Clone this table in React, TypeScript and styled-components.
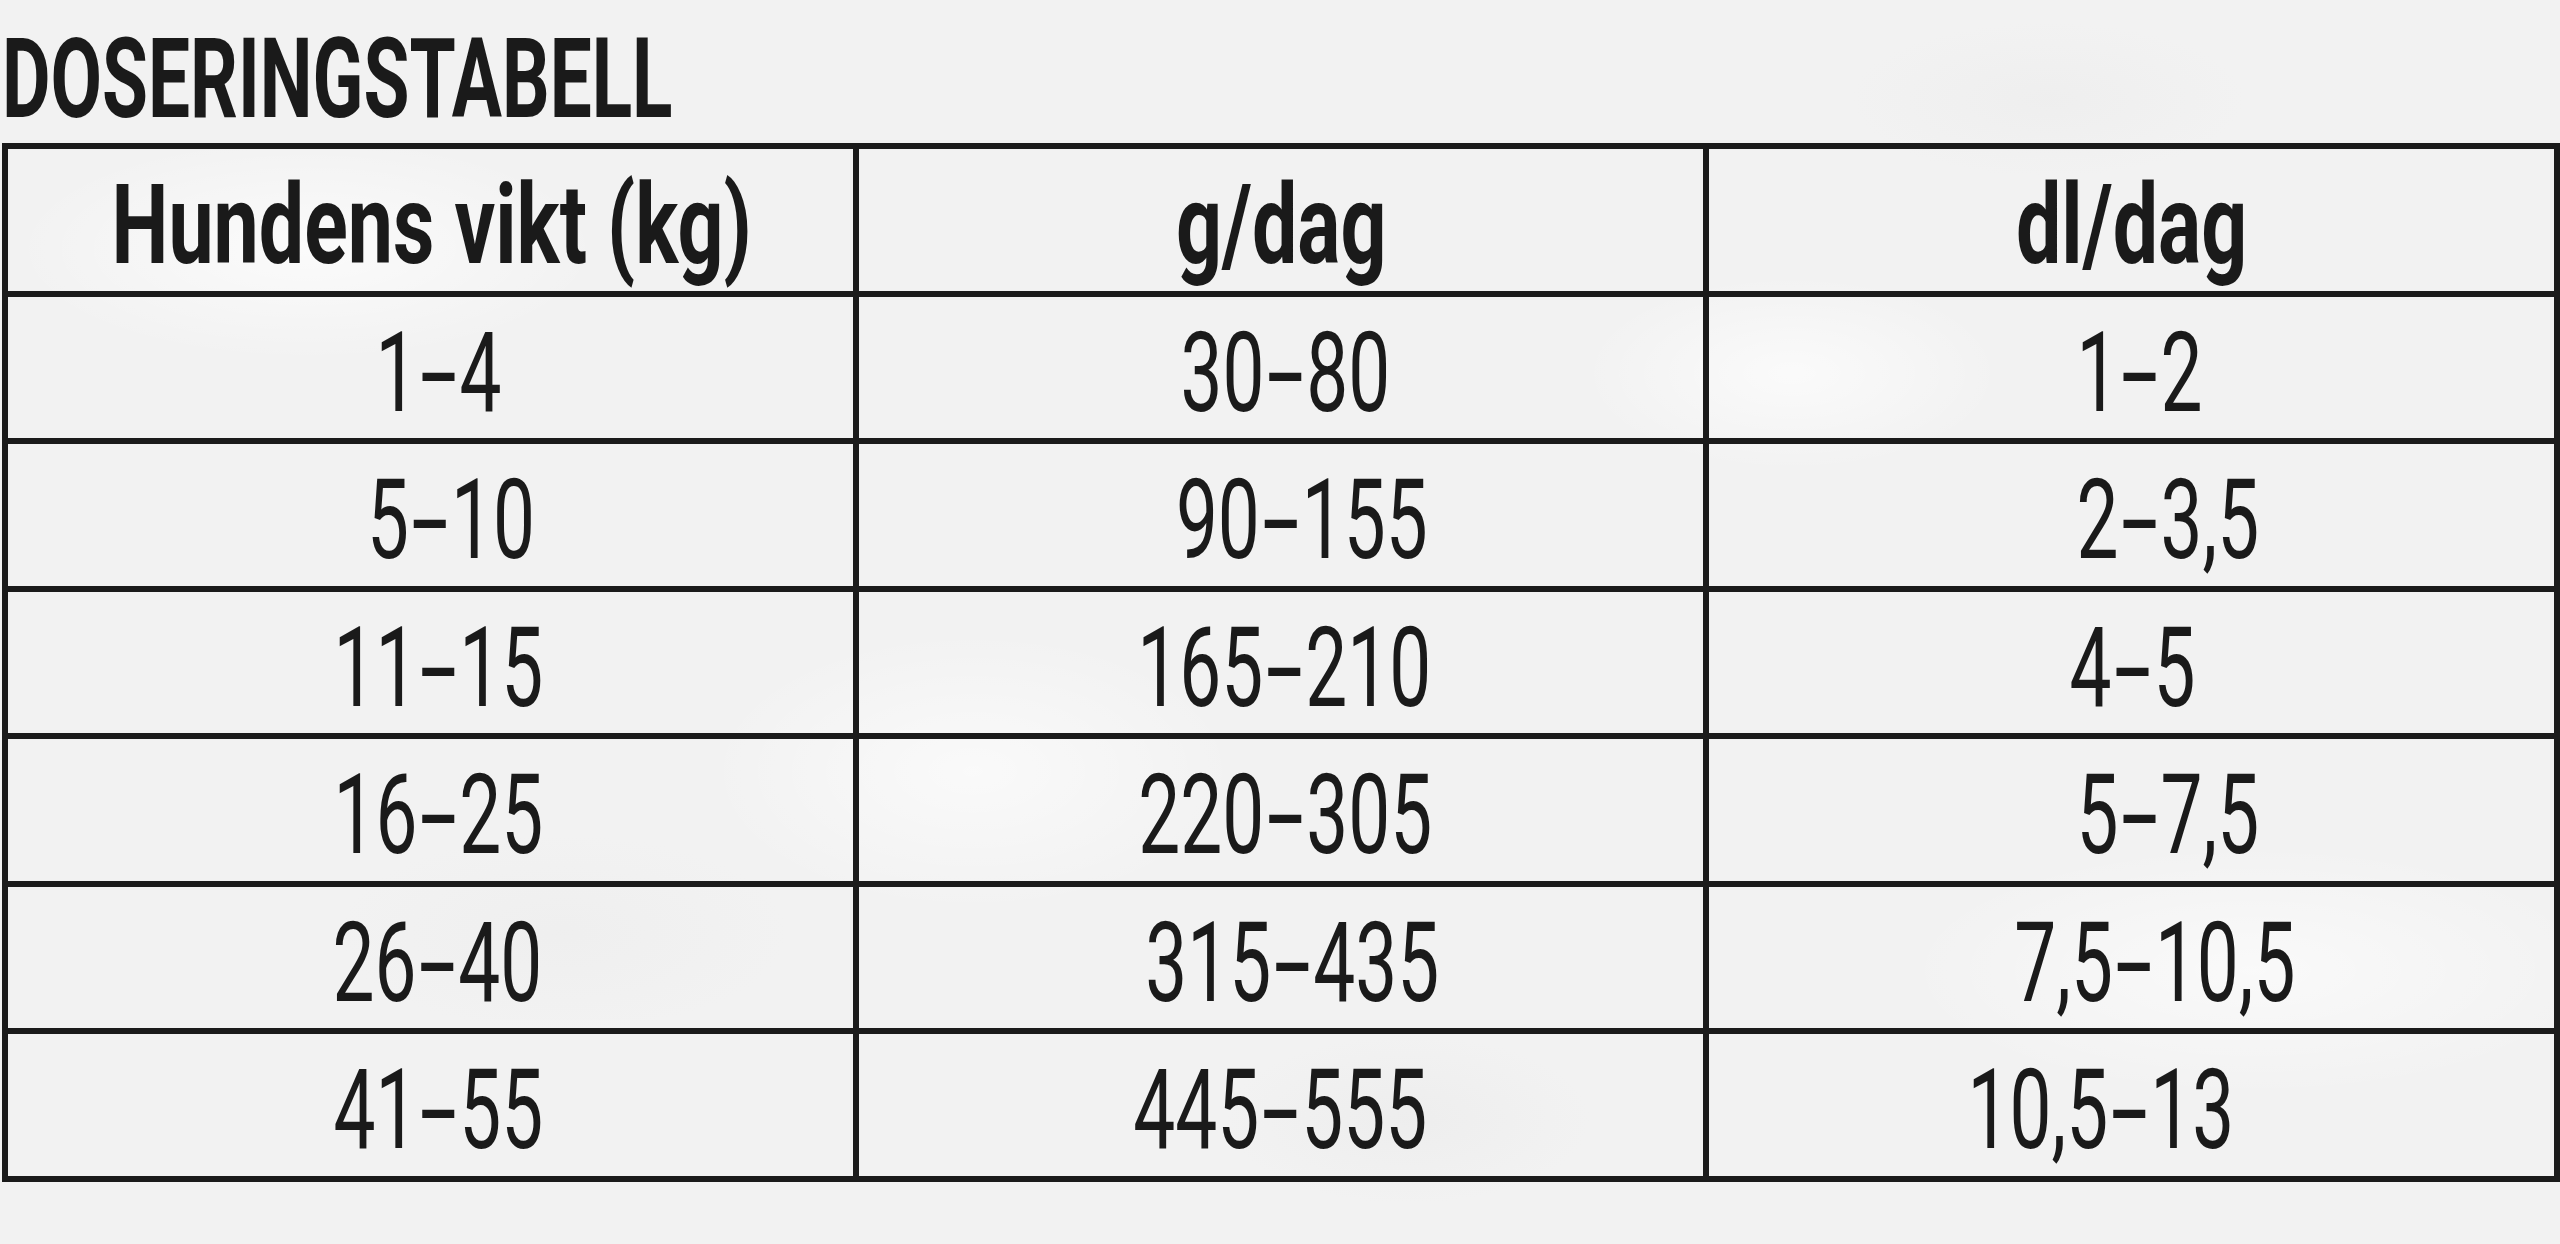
import React from "react";
import styled, { createGlobalStyle } from "styled-components";

type CellData = { text: string; shift?: number };

const header: CellData[] = [
  { text: "Hundens vikt (kg)", shift: 1 },
  { text: "g/dag" },
  { text: "dl/dag" },
];

// shift = how far the printed value sits off the cell centre (px)
const rows: CellData[][] = [
  [{ text: "1-4", shift: 8 }, { text: "30-80", shift: 4 }, { text: "1-2", shift: 8 }],
  [{ text: "5-10", shift: 21 }, { text: "90-155", shift: 21 }, { text: "2-3,5", shift: 36 }],
  [{ text: "11-15", shift: 8 }, { text: "165-210", shift: 3 }, { text: "4-5", shift: 1 }],
  [{ text: "16-25", shift: 8 }, { text: "220-305", shift: 4 }, { text: "5-7,5", shift: 36 }],
  [{ text: "26-40", shift: 7 }, { text: "315-435", shift: 11 }, { text: "7,5-10,5", shift: 23 }],
  [{ text: "41-55", shift: 8 }, { text: "445-555", shift: -1 }, { text: "10,5-13", shift: -31 }],
];

const GlobalStyle = createGlobalStyle`
  html, body {
    margin: 0;
    padding: 0;
  }
  body {
    width: 2560px;
    height: 1244px;
    overflow: hidden;
    color: #1a1a1a;
    font-family: Roboto, "Liberation Sans", sans-serif;
    background-color: #f2f2f2;
    background-image:
      radial-gradient(ellipse 420px 160px at 12% 20%, rgba(255,255,255,0.7), transparent 70%),
      radial-gradient(ellipse 380px 200px at 38% 62%, rgba(255,255,255,0.6), transparent 70%),
      radial-gradient(ellipse 300px 140px at 70% 30%, rgba(255,255,255,0.65), transparent 70%),
      radial-gradient(ellipse 500px 180px at 88% 78%, rgba(255,255,255,0.6), transparent 70%),
      radial-gradient(ellipse 260px 120px at 55% 90%, rgba(232,232,232,0.45), transparent 70%),
      radial-gradient(ellipse 320px 140px at 22% 75%, rgba(234,234,234,0.4), transparent 70%),
      radial-gradient(ellipse 280px 110px at 80% 8%, rgba(234,234,234,0.45), transparent 70%);
  }
`;

const Page = styled.main`
  padding: 23px 0 0 2px;
`;

const Title = styled.h1`
  margin: 0 0 8px;
  height: 112px;
  font-size: 112px;
  line-height: 112px;
  font-weight: 700;
  white-space: nowrap;

  span {
    display: inline-block;
    transform: scaleX(0.667);
    transform-origin: left center;
  }
`;

const Table = styled.div`
  display: grid;
  grid-template-columns: repeat(3, minmax(0, 1fr));
  width: 2558px;
  box-sizing: border-box;
  border-top: 6px solid #1b1b1b;
  border-left: 6px solid #1b1b1b;
`;

const Cell = styled.div<{ $shift: number }>`
  min-width: 0;
  height: 147.5px;
  box-sizing: border-box;
  display: flex;
  justify-content: center;
  align-items: flex-start;
  padding-top: 20px;
  padding-left: ${(p) => Math.max(0, p.$shift * 2)}px;
  padding-right: ${(p) => Math.max(0, -p.$shift * 2)}px;
  border-right: 6px solid #1b1b1b;
  border-bottom: 6px solid #1b1b1b;
  overflow: visible;
`;

const Label = styled.span<{ $bold?: boolean }>`
  display: inline-block;
  flex-shrink: 0;
  white-space: nowrap;
  font-size: 112px;
  line-height: 112px;
  font-weight: ${(p) => (p.$bold ? 700 : 400)};
  transform: scaleX(${(p) => (p.$bold ? 0.72 : 0.667)});
  transform-origin: center;
`;

const Dash = styled.span`
  display: inline-block;
  margin: 0 16px;
  transform: scaleX(1.8);
`;

const renderValue = (text: string) => {
  const parts = text.split("-");
  return parts.map((part, i) => (
    <React.Fragment key={i}>
      {i > 0 && <Dash>-</Dash>}
      {part}
    </React.Fragment>
  ));
};

export default function App() {
  return (
    <>
      <GlobalStyle />
      <Page>
        <Title>
          <span>DOSERINGSTABELL</span>
        </Title>
        <Table>
          {header.map((c) => (
            <Cell key={c.text} $shift={c.shift ?? 0}>
              <Label $bold>{c.text}</Label>
            </Cell>
          ))}
          {rows.map((row, r) =>
            row.map((c, i) => (
              <Cell key={`${r}-${i}`} $shift={c.shift ?? 0}>
                <Label>{renderValue(c.text)}</Label>
              </Cell>
            ))
          )}
        </Table>
      </Page>
    </>
  );
}
